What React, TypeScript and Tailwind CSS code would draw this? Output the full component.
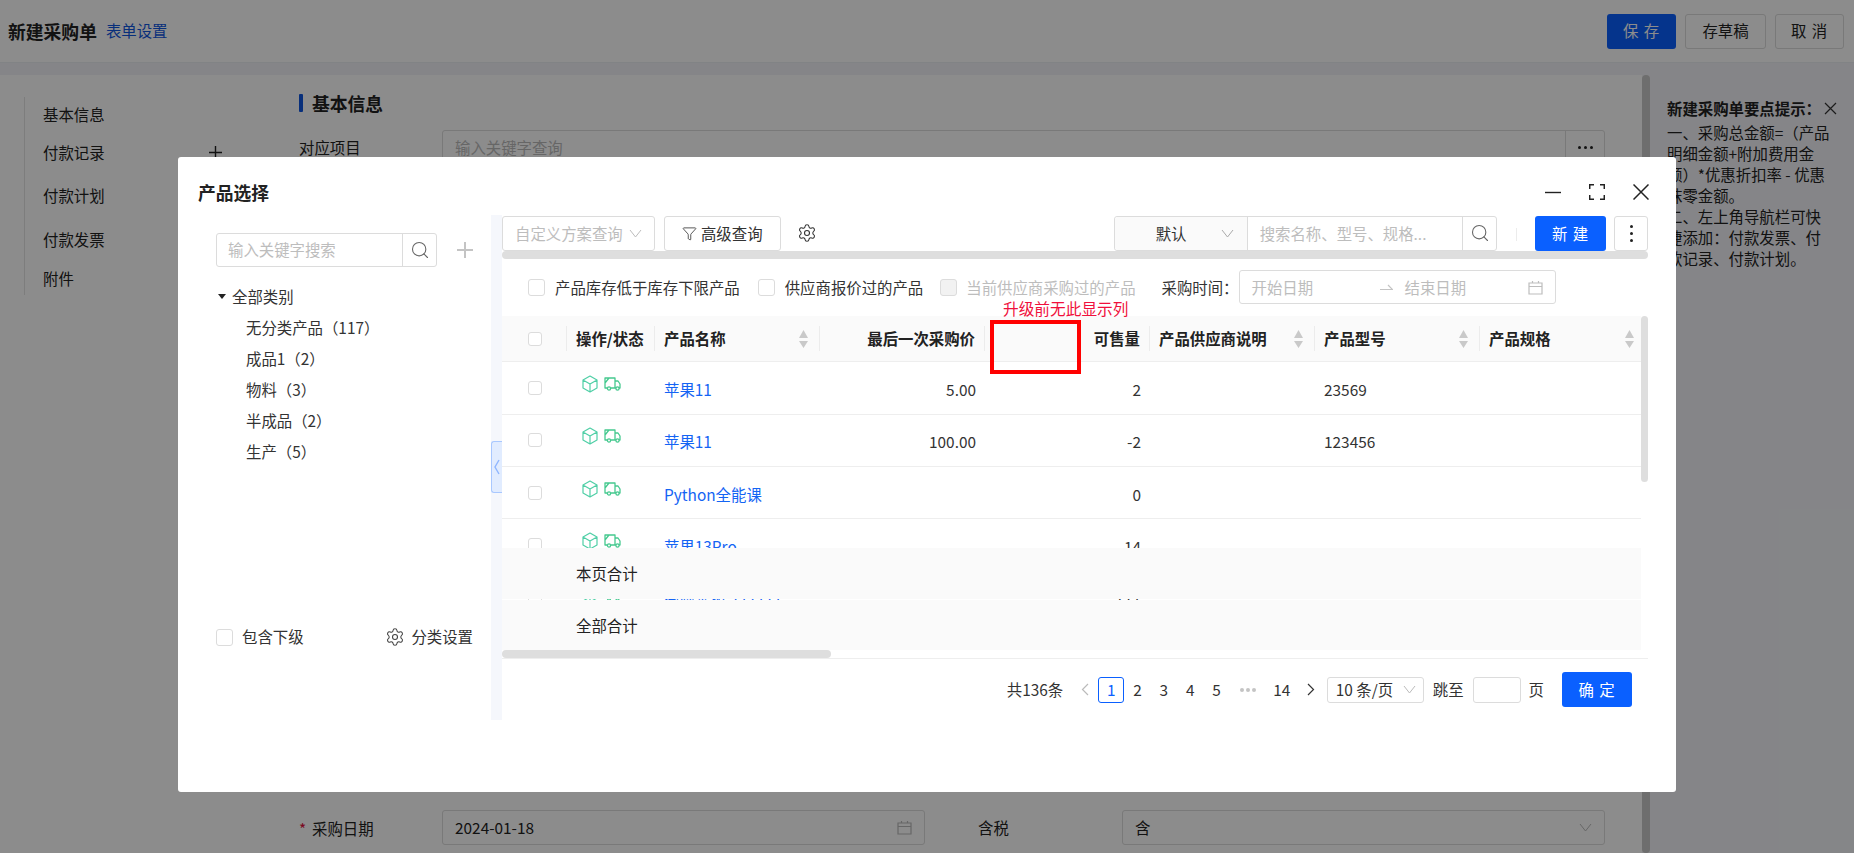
import React from 'react';
import { Filter, Search, Settings } from 'lucide-react';

const columns = 'grid-cols-[65px_88px_165px_165px_95px_70px_165px_165px_161px]';

const rows = [
  { name: '苹果11', price: '5.00', qty: '2', model: '23569' },
  { name: '苹果11', price: '100.00', qty: '-2', model: '123456' },
  { name: 'Python全能课', price: '', qty: '0', model: '' },
  { name: '苹果13Pro', price: '', qty: '14', model: '' },
  { name: '微软平板-111111', price: '', qty: '111', model: '' },
];

const categories = ['无分类产品（117）', '成品1（2）', '物料（3）', '半成品（2）', '生产（5）'];

function Chevron({ className = '' }: { className?: string }) {
  return (
    <svg width="13" height="9" viewBox="0 0 13 9" fill="none" stroke="currentColor" strokeWidth="1" className={className}>
      <path d="M1 1l5.5 7L12 1" />
    </svg>
  );
}

function CalendarIcon({ className = '' }: { className?: string }) {
  return (
    <svg width="15" height="15" viewBox="0 0 15 15" fill="none" stroke="currentColor" strokeWidth="1.2" className={className}>
      <path d="M1 3h13v11H1zM1 6.5h13M4.5 1v2.5M10.5 1v2.5" />
    </svg>
  );
}

function SortIcon() {
  return (
    <svg width="9" height="18" viewBox="0 0 9 18" className="shrink-0 fill-[#c9c9c9]">
      <path d="M4.5 0L9 8H0zM4.5 18L0 11h9z" />
    </svg>
  );
}

function Cube() {
  return (
    <svg width="16" height="18" viewBox="0 0 16 18" fill="none" stroke="#4fcfa6" strokeWidth="1.2" strokeLinejoin="round">
      <path d="M8 1l7 4v8l-7 4-7-4V5zM1 5l7 4 7-4M8 9v8" />
    </svg>
  );
}

function Truck() {
  return (
    <svg width="17" height="14" viewBox="0 0 17 14" fill="none" stroke="#45c98f" strokeWidth="1.3" strokeLinejoin="round">
      <path d="M3 11H1V1h10v10H7M11 4h3l2 3v4h-1M11 11h1M1 6l4-5" />
      <circle cx="5" cy="11.5" r="1.6" />
      <circle cx="13.5" cy="11.5" r="1.6" />
    </svg>
  );
}

function Box({ disabled = false, className = '' }: { disabled?: boolean; className?: string }) {
  return (
    <span
      className={`block shrink-0 rounded-[3px] border border-[#dcdcdc] ${disabled ? 'bg-[#f2f2f2]' : 'bg-white'} ${className}`}
    />
  );
}

function HeadCell({ label, sort, right }: { label?: string; sort?: boolean; right?: boolean }) {
  return (
    <div className="flex h-full items-center">
      <div className={`flex min-w-0 flex-1 items-center pl-[9px] pr-[9px] ${right ? 'justify-end' : 'justify-between'}`}>
        {label && <span className="whitespace-nowrap font-bold text-[#222]">{label}</span>}
        {sort && <span className="mr-[2px] flex"><SortIcon /></span>}
      </div>
      <span className="h-[25px] w-[1px] shrink-0 bg-[#ececec]" />
    </div>
  );
}

function Background() {
  return (
    <div className="flex h-[853px] flex-col bg-[#f2f3f7] text-[15.4px] text-[#222]">
      <header className="flex h-[63px] shrink-0 items-center border-b border-[#eceef2] bg-white pl-[8px] pr-[10px]">
        <span className="text-[17.8px] font-bold">新建采购单</span>
        <span className="ml-[9px] text-[#0f56e0]">表单设置</span>
        <div className="ml-auto flex items-center gap-[9px]">
          <span className="flex h-[35px] w-[69px] items-center justify-center rounded-[3px] bg-[#0a60ff] tracking-[1px] text-white">保 存</span>
          <span className="flex h-[35px] w-[81px] items-center justify-center rounded-[3px] border border-[#dcdcdc]">存草稿</span>
          <span className="flex h-[35px] w-[69px] items-center justify-center rounded-[3px] border border-[#dcdcdc] tracking-[1px]">取 消</span>
        </div>
      </header>
      <div className="mt-[12px] flex min-h-0 flex-1">
        <div className="flex w-[1642px] shrink-0 bg-white">
          <nav className="ml-[24px] mt-[22px] flex h-[198px] w-[275px] shrink-0 flex-col border-l border-[#e4e4e4] pl-[18px]">
            <span className="mt-[7px] leading-[20px]">基本信息</span>
            <div className="mt-[18px] flex items-center justify-between leading-[20px]">
              <span>付款记录</span>
              <svg width="13" height="13" viewBox="0 0 13 13" stroke="#222" strokeWidth="1.4" className="mr-[77px]">
                <path d="M6.5 0v13M0 6.5h13" />
              </svg>
            </div>
            <span className="mt-[23px] leading-[20px]">付款计划</span>
            <span className="mt-[24px] leading-[20px]">付款发票</span>
            <span className="mt-[19px] leading-[20px]">附件</span>
          </nav>
          <div className="flex min-w-0 flex-1 flex-col">
            <div className="mt-[19px] flex h-[18px] items-center">
              <span className="h-[18px] w-[4px] rounded-[1px] bg-[#0f56e0]" />
              <span className="ml-[9px] text-[17.8px] font-bold">基本信息</span>
            </div>
            <div className="mt-[18px] flex items-start">
              <span className="mt-[7px] w-[143px] leading-[20px]">对应项目</span>
              <div className="flex h-[35px] w-[1163px] items-center rounded-[3px] border border-[#dcdcdc] pl-[12px]">
                <span className="flex-1 text-[#bbb]">输入关键字查询</span>
                <span className="flex h-full w-[39px] items-center justify-center gap-[3px] border-l border-[#dcdcdc]">
                  <i className="h-[3px] w-[3px] rounded-full bg-[#222]" />
                  <i className="h-[3px] w-[3px] rounded-full bg-[#222]" />
                  <i className="h-[3px] w-[3px] rounded-full bg-[#222]" />
                </span>
              </div>
            </div>
            <div className="mt-auto mb-[8px] flex items-center">
              <span className="flex w-[143px] items-center leading-[20px]">
                <span className="w-[13px] text-[#e0103c]">*</span>
                <span>采购日期</span>
              </span>
              <div className="flex h-[35px] w-[483px] items-center justify-between rounded-[3px] border border-[#dcdcdc] pl-[12px] pr-[12px]">
                <span>2024-01-18</span>
                <CalendarIcon className="text-[#bbb]" />
              </div>
              <span className="ml-[53px] w-[144px]">含税</span>
              <div className="flex h-[35px] w-[483px] items-center justify-between rounded-[3px] border border-[#dcdcdc] pl-[12px] pr-[12px]">
                <span>含</span>
                <Chevron className="text-[#bbb]" />
              </div>
            </div>
          </div>
        </div>
        <div className="h-full w-[8px] shrink-0 rounded-[4px] bg-[#c8c8c8]" />
        <aside className="min-w-0 flex-1 pl-[17px] pt-[23px] leading-[21px]">
          <div className="flex items-center">
            <span className="whitespace-nowrap font-bold">新建采购单要点提示：</span>
            <svg width="13" height="13" viewBox="0 0 13 13" stroke="#333" strokeWidth="1.2" className="ml-[3px] shrink-0">
              <path d="M1 1l11 11M12 1L1 12" />
            </svg>
          </div>
          <p className="mt-[3px] whitespace-pre">
            {'一、采购总金额=（产品\n明细金额+附加费用金\n额）*优惠折扣率 - 优惠\n抹零金额。\n二、左上角导航栏可快\n捷添加：付款发票、付\n款记录、付款计划。'}
          </p>
        </aside>
      </div>
    </div>
  );
}

function CategoryPanel() {
  return (
    <div className="flex w-[313px] shrink-0 flex-col pl-[38px] pr-[18px]">
      <div className="mt-[18px] flex items-center">
        <div className="flex h-[34px] w-[221px] items-center rounded-[3px] border border-[#dcdcdc]">
          <span className="flex-1 pl-[11px] text-[#bdbdbd]">输入关键字搜索</span>
          <span className="flex h-full w-[34px] items-center justify-center border-l border-[#dcdcdc]">
            <Search size={20} strokeWidth={1.3} className="text-[#666]" />
          </span>
        </div>
        <svg width="16" height="16" viewBox="0 0 16 16" stroke="#c4c4c4" strokeWidth="2" className="ml-[20px]">
          <path d="M8 0v16M0 8h16" />
        </svg>
      </div>
      <div className="mt-[14px] flex h-[31px] items-center">
        <span className="ml-[2px] h-0 w-0 border-x-[4px] border-t-[5px] border-x-transparent border-t-[#222]" />
        <span className="ml-[6px]">全部类别</span>
      </div>
      {categories.map(c => (
        <div key={c} className="flex h-[31px] items-center pl-[30px]">{c}</div>
      ))}
      <div className="mb-[74px] mt-auto flex h-[18px] items-center justify-between">
        <div className="flex items-center">
          <Box className="h-[17px] w-[17px]" />
          <span className="ml-[9px]">包含下级</span>
        </div>
        <div className="flex items-center">
          <Settings size={20} strokeWidth={1.3} className="text-[#444]" />
          <span className="ml-[6px]">分类设置</span>
        </div>
      </div>
    </div>
  );
}

function Toolbar() {
  return (
    <div className="mt-[1px] flex h-[35px] items-stretch">
      <div className="flex w-[153px] items-center justify-between rounded-[3px] border border-[#dcdcdc] pl-[12px] pr-[12px] text-[#bdbdbd]">
        <span className="whitespace-nowrap">自定义方案查询</span>
        <Chevron />
      </div>
      <div className="ml-[9px] flex w-[117px] items-center justify-center rounded-[3px] border border-[#dcdcdc]">
        <Filter size={15} strokeWidth={1.3} />
        <span className="ml-[4px]">高级查询</span>
      </div>
      <span className="ml-[16px] flex items-center">
        <Settings size={20} strokeWidth={1.3} className="text-[#333]" />
      </span>
      <div className="ml-[297px] flex w-[384px] items-stretch rounded-[3px] border border-[#dcdcdc]">
        <div className="flex w-[133px] items-center justify-between rounded-l-[3px] border-r border-[#dcdcdc] bg-[#fafafa] pl-[41px] pr-[13px]">
          <span>默认</span>
          <Chevron className="text-[#aaa]" />
        </div>
        <span className="flex flex-1 items-center whitespace-nowrap pl-[12px] text-[#bdbdbd]">搜索名称、型号、规格...</span>
        <span className="flex w-[34px] items-center justify-center border-l border-[#dcdcdc]">
          <Search size={20} strokeWidth={1.3} className="text-[#666]" />
        </span>
      </div>
      <span className="ml-[19px] mt-[12px] h-[13px] w-[1px] bg-[#ececec]" />
      <span className="ml-[18px] flex w-[71px] items-center justify-center rounded-[3px] bg-[#0a60ff] tracking-[1px] text-white">新 建</span>
      <span className="ml-[8px] flex w-[34px] flex-col items-center justify-center gap-[4px] rounded-[3px] border border-[#dcdcdc]">
        <i className="h-[3px] w-[3px] rounded-full bg-[#222]" />
        <i className="h-[3px] w-[3px] rounded-full bg-[#222]" />
        <i className="h-[3px] w-[3px] rounded-full bg-[#222]" />
      </span>
    </div>
  );
}

function Filters() {
  return (
    <div className="flex h-[57px] items-center whitespace-nowrap pl-[26px]">
      <Box className="h-[17px] w-[17px]" />
      <span className="ml-[10px]">产品库存低于库存下限产品</span>
      <Box className="ml-[18px] h-[17px] w-[17px]" />
      <span className="ml-[10px]">供应商报价过的产品</span>
      <Box disabled className="ml-[17px] h-[17px] w-[17px]" />
      <span className="ml-[9px] text-[#bdbdbd]">当前供应商采购过的产品</span>
      <span className="ml-[26px]">采购时间：</span>
      <div className="flex h-[34px] w-[317px] items-center rounded-[3px] border border-[#dcdcdc] pl-[12px] text-[#bdbdbd]">
        <span className="w-[128px]">开始日期</span>
        <svg width="13" height="7" viewBox="0 0 13 7" fill="none" stroke="#c4c4c4" strokeWidth="1.2">
          <path d="M0 5.5h12.5L8 1" />
        </svg>
        <span className="ml-[12px] w-[123px]">结束日期</span>
        <CalendarIcon />
      </div>
    </div>
  );
}

function ProductTable() {
  return (
    <div className="flex h-[335px]">
      <div className="relative w-[1139px] shrink-0 overflow-hidden">
        <div className={`grid h-[46.5px] ${columns} border-b border-[#eeeeee] bg-[#fafafa]`}>
          <div className="flex items-center justify-between pl-[26px]">
            <Box className="h-[14px] w-[14px]" />
            <span className="h-[25px] w-[1px] bg-[#ececec]" />
          </div>
          <HeadCell label="操作/状态" />
          <HeadCell label="产品名称" sort />
          <HeadCell label="最后一次采购价" right />
          <div />
          <HeadCell label="可售量" right />
          <HeadCell label="产品供应商说明" sort />
          <HeadCell label="产品型号" sort />
          <div className="flex h-full items-center justify-between pl-[9px] pr-[7px]">
            <span className="font-bold text-[#222]">产品规格</span>
            <SortIcon />
          </div>
        </div>
        {rows.map((r, i) => (
          <div key={i} className={`grid h-[52.4px] ${columns} items-center border-b border-[#eeeeee]`}>
            <div className="pl-[26px]"><Box className="h-[14px] w-[14px]" /></div>
            <div className="mb-[8px] flex items-center gap-[6px] pl-[15px]">
              <Cube />
              <Truck />
            </div>
            <span className="mt-[3px] pl-[9px] text-[#1464f4]">{r.name}</span>
            <span className="mt-[3px] pr-[9px] text-right">{r.price}</span>
            <span />
            <span className="mt-[3px] pr-[9px] text-right">{r.qty}</span>
            <span />
            <span className="mt-[3px] pl-[9px]">{r.model}</span>
            <span />
          </div>
        ))}
        <div className="absolute inset-x-0 bottom-0 flex flex-col gap-[1px]">
          <div className="flex h-[51px] items-center bg-[#fafafa] pl-[74px] text-[#222]">本页合计</div>
          <div className="flex h-[50px] items-center bg-[#fafafa] pl-[74px] text-[#222]">全部合计</div>
        </div>
      </div>
      <div className="h-[166px] w-[7px] shrink-0 rounded-[4px] bg-[#dedede]" />
    </div>
  );
}

function Pagination() {
  const pages = ['2', '3', '4', '5'];
  return (
    <div className="flex h-[61px] items-center justify-end whitespace-nowrap pr-[16px]">
      <span>共136条</span>
      <span className="ml-[9px] flex w-[26px] justify-center">
        <svg width="8" height="13" viewBox="0 0 8 13" fill="none" stroke="#bbb" strokeWidth="1.2"><path d="M7 1L1.5 6.5 7 12" /></svg>
      </span>
      <span className="flex h-[26px] w-[26px] items-center justify-center rounded-[3px] border border-[#0a60ff] text-[#0a60ff]">1</span>
      {pages.map(p => (
        <span key={p} className="flex w-[26.4px] justify-center">{p}</span>
      ))}
      <span className="flex w-[36px] justify-center gap-[2px]">
        <i className="h-[4px] w-[4px] rounded-full bg-[#c4c4c4]" />
        <i className="h-[4px] w-[4px] rounded-full bg-[#c4c4c4]" />
        <i className="h-[4px] w-[4px] rounded-full bg-[#c4c4c4]" />
      </span>
      <span className="flex w-[32px] justify-center">14</span>
      <span className="flex w-[26px] justify-center">
        <svg width="8" height="13" viewBox="0 0 8 13" fill="none" stroke="#333" strokeWidth="1.2"><path d="M1 1l5.5 5.5L1 12" /></svg>
      </span>
      <div className="ml-[3px] flex h-[26px] w-[97px] items-center justify-between rounded-[3px] border border-[#dcdcdc] pl-[8px] pr-[7px]">
        <span>10 条/页</span>
        <Chevron className="text-[#bbb]" />
      </div>
      <span className="ml-[9px]">跳至</span>
      <span className="ml-[9px] h-[26px] w-[48px] rounded-[3px] border border-[#dcdcdc]" />
      <span className="ml-[8px]">页</span>
      <span className="ml-[18px] flex h-[35px] w-[70px] items-center justify-center rounded-[3px] bg-[#0a60ff] tracking-[1px] text-white">确 定</span>
    </div>
  );
}

function Modal() {
  return (
    <div className="absolute left-[178px] top-[157px] flex h-[635px] w-[1498px] flex-col rounded-[3px] bg-white text-[15.4px] text-[#333]">
      <div className="flex h-[58px] shrink-0 items-start pl-[20px] pr-[27px] pt-[23px]">
        <span className="text-[17.8px] font-bold leading-[24px] text-[#222]">产品选择</span>
        <div className="ml-auto mt-[4px] flex items-center gap-[28px]">
          <svg width="16" height="16" viewBox="0 0 16 16" stroke="#222" strokeWidth="1.4"><path d="M0 8.5h16" /></svg>
          <svg width="16" height="16" viewBox="0 0 16 16" fill="none" stroke="#222" strokeWidth="1.5"><path d="M0.7 5V0.7H5M11 0.7h4.3V5M15.3 11v4.3H11M5 15.3H0.7V11" /></svg>
          <svg width="16" height="16" viewBox="0 0 16 16" stroke="#222" strokeWidth="1.5"><path d="M0.5 0.5l15 15M15.5 0.5l-15 15" /></svg>
        </div>
      </div>
      <div className="flex h-[505px] shrink-0">
        <CategoryPanel />
        <div className="w-[11px] shrink-0 bg-[#f5f7fc] pt-[226px]">
          <div className="flex h-[52px] items-center justify-center rounded-l-[3px] border border-r-0 border-[#a9c8ff] bg-[#e1ecff] text-[#8fb6ff]">
            <svg width="6" height="16" viewBox="0 0 6 16" fill="none" stroke="currentColor" strokeWidth="1.4"><path d="M5 1L1 8l4 7" /></svg>
          </div>
        </div>
        <div className="flex w-[1146px] shrink-0 flex-col">
          <Toolbar />
          <div className="h-[8px] shrink-0 rounded-[4px] bg-[#dedede]" />
          <Filters />
          <ProductTable />
          <div className="border-b border-[#eeeeee]">
            <div className="h-[8px] w-[329px] rounded-[4px] bg-[#dedede]" />
          </div>
          <Pagination />
        </div>
      </div>
      {/* hand-drawn annotation on top of the screenshot */}
      <span className="absolute left-[825px] top-[141px] text-[15.7px] leading-[22px] text-[#f0103c]">升级前无此显示列</span>
      <span className="absolute left-[812px] top-[163px] h-[54px] w-[91px] border-[4px] border-[#ff0000]" />
    </div>
  );
}

export default function App() {
  return (
    <div className="relative h-[853px] w-[1854px] overflow-hidden font-['Noto_Sans_CJK_SC',sans-serif]">
      <Background />
      <div className="absolute inset-0 bg-black/45" />
      <Modal />
    </div>
  );
}
